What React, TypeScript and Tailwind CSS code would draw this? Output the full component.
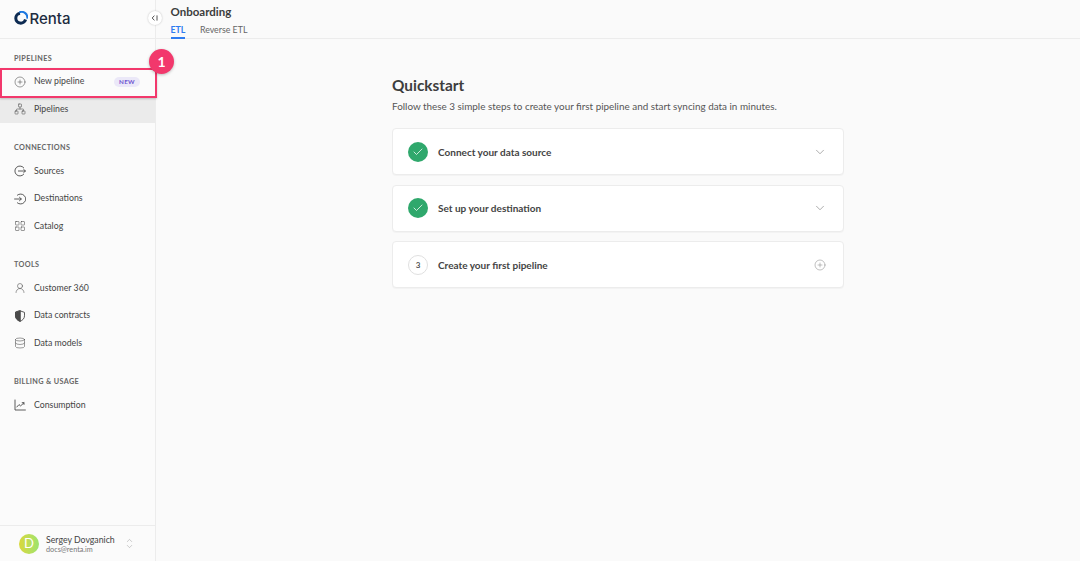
import React from "react";
import { ChevronDown, ChevronUp, CirclePlus, Check, Network, LayoutGrid, UserRound, Database } from "lucide-react";

const svgProps = { width: 12, height: 12, viewBox: "0 0 12 12", fill: "none", stroke: "currentColor", strokeWidth: 0.9, strokeLinecap: "round" as const, strokeLinejoin: "round" as const };

const SourcesIcon = () => (
  <svg {...svgProps}>
    <path d="M9.6 2.6A5 5 0 1 0 9.6 9.4" />
    <path d="M4.4 6h7M9.6 4.3 11.4 6 9.6 7.7" />
  </svg>
);
const DestinationsIcon = () => (
  <svg {...svgProps}>
    <path d="M3.4 2.1A5 5 0 1 1 3.4 9.9" />
    <path d="M.6 6h6.6M5.5 4.3 7.3 6 5.5 7.7" />
  </svg>
);
const ShieldIcon = () => (
  <svg {...svgProps}>
    <path d="M6 .8 10.5 2.4v3.4c0 2.8-2 4.6-4.5 5.5C3.5 10.4 1.5 8.6 1.5 5.8V2.4z" />
    <path d="M6 .8 1.5 2.4v3.4c0 2.8 2 4.6 4.5 5.5z" fill="currentColor" />
  </svg>
);
const ChartIcon = () => (
  <svg {...svgProps}>
    <path d="M1 1v10h10.4" />
    <path d="M2.8 8 5 5.6l1.6 1.3L10 3.8M8.2 3.7H10v1.7" />
  </svg>
);

function Item({ icon, label, active, badge }: { icon: React.ReactNode; label: string; active?: boolean; badge?: boolean }) {
  return (
    <div className={`flex h-[27.5px] items-center pl-[14px] pr-[15px] ${active ? "bg-[#ebebeb]" : ""}`}>
      <span className="flex w-[20px] justify-start text-[#4a4a4a]">{icon}</span>
      <span className="text-[8.75px] leading-none text-[#444]">{label}</span>
      {badge && (
        <span className="ml-auto flex h-[10px] w-[26px] items-center justify-center rounded-full bg-[#ebe8f8] text-[6.25px] font-bold tracking-[0.3px] text-[#6f55d0]">NEW</span>
      )}
    </div>
  );
}

function Section({ title, children }: { title: string; children: React.ReactNode }) {
  return (
    <div className="mb-[20px]">
      <div className="mb-[3.5px] flex h-[11px] items-center pl-[14px] text-[7.25px] font-bold tracking-[0.35px] text-[#666]">{title}</div>
      {children}
    </div>
  );
}

function Card({ lead, title, right }: { lead: React.ReactNode; title: string; right: React.ReactNode }) {
  return (
    <div className="flex h-[47px] items-center rounded-[4px] border border-[#ececec] bg-white pl-[15px] pr-[16px] shadow-[0_1px_1px_rgba(0,0,0,0.03)]">
      <span className="mr-[10px] flex h-[20px] w-[20px] items-center justify-center">{lead}</span>
      <span className="pt-[1px] text-[10px] font-bold text-[#444]">{title}</span>
      <span className="ml-auto flex items-center text-[#808080]">{right}</span>
    </div>
  );
}

const Done = () => (
  <span className="flex h-[20px] w-[20px] items-center justify-center rounded-full bg-[#2fa86c] text-white">
    <Check size={12} strokeWidth={1.5} />
  </span>
);

export default function App() {
  const ic = { size: 12, strokeWidth: 1.1 };
  return (
    <div className="relative flex h-[561px] w-[1080px] overflow-hidden bg-[#fafafa] font-['Lato','Noto_Sans',sans-serif]">
      <aside className="flex w-[156px] shrink-0 flex-col border-r border-[#ececec] bg-[#fbfbfb]">
        <div className="flex h-[39px] items-center border-b border-[#ececec] pb-[2px] pl-[14px]">
          <svg width="14" height="14" viewBox="0 0 14 14" className="mr-[1.5px]" fill="none">
            <path d="M6 2.2A5 5 0 1 0 11.6 8.5" stroke="#0d2b52" strokeWidth="3" />
            <path d="M5.4 1.3a5.7 5.7 0 0 1 7.8 6.4" stroke="#1c77e0" strokeWidth="2" />
          </svg>
          <span className="font-['Inter',sans-serif] text-[15px] font-medium leading-none text-[#1d2b40]">Renta</span>
        </div>
        <div className="pt-[14.5px]">
          <Section title="PIPELINES">
            <Item icon={<CirclePlus {...ic} />} label="New pipeline" badge />
            <Item icon={<Network {...ic} />} label="Pipelines" active />
          </Section>
          <Section title="CONNECTIONS">
            <Item icon={<SourcesIcon />} label="Sources" />
            <Item icon={<DestinationsIcon />} label="Destinations" />
            <Item icon={<LayoutGrid {...ic} />} label="Catalog" />
          </Section>
          <Section title="TOOLS">
            <Item icon={<UserRound {...ic} />} label="Customer 360" />
            <Item icon={<ShieldIcon />} label="Data contracts" />
            <Item icon={<Database {...ic} />} label="Data models" />
          </Section>
          <Section title="BILLING & USAGE">
            <Item icon={<ChartIcon />} label="Consumption" />
          </Section>
        </div>
        <div className="mt-auto flex h-[36px] items-center border-t border-[#ececec] pl-[19px]">
          <span className="mr-[7px] flex h-[20px] w-[20px] items-center justify-center rounded-full bg-gradient-to-r from-[#d9d83a] to-[#9be36d] text-[13px] leading-none text-white">D</span>
          <div className="flex flex-col pt-[1px]">
            <span className="text-[8.75px] leading-[11px] text-[#444]">Sergey Dovganich</span>
            <span className="text-[7.25px] leading-[9px] text-[#777]">docs@renta.im</span>
          </div>
          <span className="ml-[10.5px] flex flex-col text-[#888]">
            <ChevronUp size={9} strokeWidth={1.1} className="-mb-[3px]" />
            <ChevronDown size={9} strokeWidth={1.1} />
          </span>
        </div>
      </aside>

      <main className="flex min-w-0 flex-1 flex-col">
        <header className="h-[39px] border-b border-[#ececec] pl-[14.5px]">
          <div className="pt-[5px] text-[11.5px] font-bold leading-[14px] text-[#3d3d3d]">Onboarding</div>
          <div className="mt-[3px] flex gap-[14.5px] text-[8.8px] leading-[16px]">
            <span className="h-[17px] border-b-2 border-[#2f7cf0] font-bold text-[#2f7cf0]">ETL</span>
            <span className="text-[#666]">Reverse ETL</span>
          </div>
        </header>
        <div className="pl-[236px] pt-[36px]">
          <div className="w-[452px]">
            <h1 className="text-[15.4px] font-bold leading-[20px] text-[#3d3d3d]">Quickstart</h1>
            <p className="mt-[4px] text-[9.9px] leading-[15px] text-[#555]">Follow these 3 simple steps to create your first pipeline and start syncing data in minutes.</p>
            <div className="mt-[14px] flex flex-col gap-[9.5px]">
              <Card lead={<Done />} title="Connect your data source" right={<ChevronDown size={14} strokeWidth={1.1} />} />
              <Card lead={<Done />} title="Set up your destination" right={<ChevronDown size={14} strokeWidth={1.1} />} />
              <Card
                lead={<span className="flex h-[20px] w-[20px] items-center justify-center rounded-full border border-[#e0e0e0] text-[8px] font-bold text-[#555]">3</span>}
                title="Create your first pipeline"
                right={<span className="px-[1px]"><CirclePlus size={12} strokeWidth={1} /></span>}
              />
            </div>
          </div>
        </div>
      </main>

      <span className="absolute left-[148px] top-[10.5px] flex h-[14px] w-[14px] items-center justify-center rounded-full bg-white text-[#555] shadow-[0_0_2px_rgba(0,0,0,0.25)]">
        <svg width="8" height="8" viewBox="0 0 8 8" fill="none" stroke="currentColor" strokeWidth="1">
          <path d="M3.4 1.6 1.2 4l2.2 2.4M6 1.4v5.2" />
        </svg>
      </span>
      <div className="absolute left-[0px] top-[67.5px] h-[30px] w-[157px] border-2 border-[#f2386c] shadow-[0_1px_2px_rgba(0,0,0,0.2)]" />
      <span className="absolute left-[149px] top-[49px] flex h-[25px] w-[25px] items-center justify-center rounded-full bg-[#f2386c] text-[14px] font-bold leading-none text-white shadow-[0_1px_3px_rgba(0,0,0,0.25)]">1</span>
    </div>
  );
}
